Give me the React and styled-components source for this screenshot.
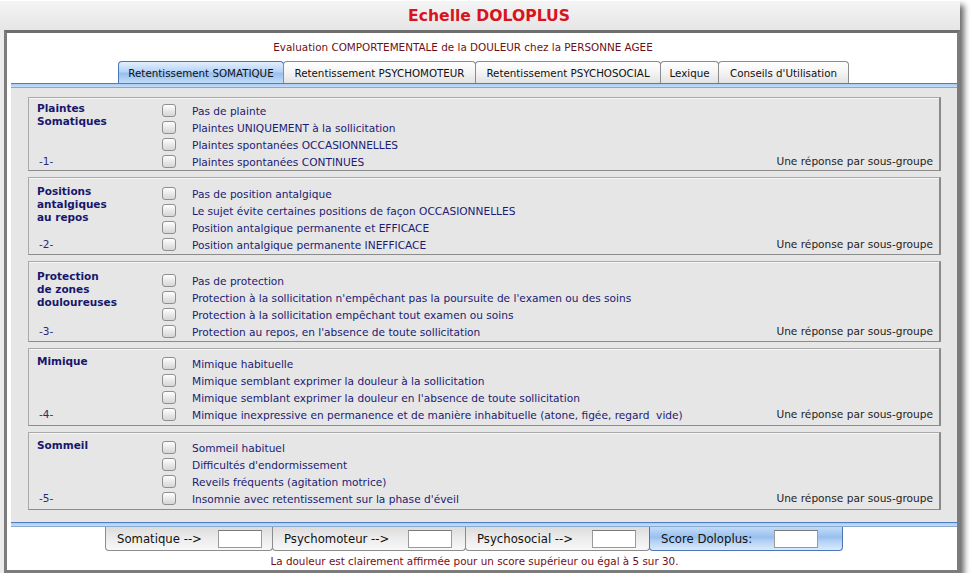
import React from "react";
import styled, { createGlobalStyle } from "styled-components";

const GlobalStyle = createGlobalStyle`
  html, body {
    margin: 0;
    padding: 0;
    background: #ffffff;
  }
  body {
    font-family: "DejaVu Sans", "Liberation Sans", sans-serif;
  }
`;

const topTabs = [
  { label: "Retentissement SOMATIQUE", width: 166, active: true },
  { label: "Retentissement PSYCHOMOTEUR", width: 193 },
  { label: "Retentissement PSYCHOSOCIAL", width: 186 },
  { label: "Lexique", width: 59 },
  { label: "Conseils d'Utilisation", width: 131 },
];

const groups = [
  {
    title: ["Plaintes", "Somatiques"],
    num: "-1-",
    pt: 4,
    pb: 0,
    items: [
      "Pas de plainte",
      "Plaintes UNIQUEMENT à la sollicitation",
      "Plaintes spontanées OCCASIONNELLES",
      "Plaintes spontanées CONTINUES",
    ],
  },
  {
    title: ["Positions", "antalgiques", "au repos"],
    num: "-2-",
    pt: 7,
    pb: 1,
    items: [
      "Pas de position antalgique",
      "Le sujet évite certaines positions de façon OCCASIONNELLES",
      "Position antalgique permanente et EFFICACE",
      "Position antalgique permanente INEFFICACE",
    ],
  },
  {
    title: ["Protection", "de zones", "douloureuses"],
    num: "-3-",
    pt: 10,
    pb: 1,
    lift: 2,
    items: [
      "Pas de protection",
      "Protection à la sollicitation n'empêchant pas la poursuite de l'examen ou des soins",
      "Protection à la sollicitation empêchant tout examen ou soins",
      "Protection au repos, en l'absence de toute sollicitation",
    ],
  },
  {
    title: ["Mimique"],
    num: "-4-",
    pt: 6,
    pb: 2,
    items: [
      "Mimique habituelle",
      "Mimique semblant exprimer la douleur à la sollicitation",
      "Mimique semblant exprimer la douleur en l'absence de toute sollicitation",
      "Mimique inexpressive en permanence et de manière inhabituelle (atone, figée, regard  vide)",
    ],
  },
  {
    title: ["Sommeil"],
    num: "-5-",
    pt: 6,
    pb: 2,
    items: [
      "Sommeil habituel",
      "Difficultés d'endormissement",
      "Reveils fréquents (agitation motrice)",
      "Insomnie avec retentissement sur la phase d'éveil",
    ],
  },
];

const scoreTabs = [
  { label: "Somatique -->", width: 168, pr: 10 },
  { label: "Psychomoteur -->", width: 194, pr: 13 },
  { label: "Psychosocial -->", width: 185, pr: 13 },
  { label: "Score Doloplus:", width: 194, pr: 24, active: true },
];

export default function App() {
  return (
    <>
      <GlobalStyle />
      <Window>
        <TitleBar>Echelle DOLOPLUS</TitleBar>
        <Frame>
          <Subtitle>
            Evaluation COMPORTEMENTALE de la DOULEUR chez la PERSONNE AGEE
          </Subtitle>
          <TabRow>
            {topTabs.map((t) => (
              <TopTab key={t.label} $w={t.width} $active={t.active}>
                {t.label}
              </TopTab>
            ))}
          </TabRow>
          <BlueLine />
          <Panel>
            {groups.map((g) => (
              <Group key={g.num} $pt={g.pt} $pb={g.pb}>
                <LabelCol>
                  <GroupTitle $lift={g.lift}>
                    {g.title.map((l) => (
                      <div key={l}>{l}</div>
                    ))}
                  </GroupTitle>
                  <GroupNum>{g.num}</GroupNum>
                </LabelCol>
                <Options>
                  {g.items.map((it) => (
                    <Option key={it}>
                      <Check />
                      <OptionText>{it}</OptionText>
                    </Option>
                  ))}
                </Options>
                <Note>Une réponse par sous-groupe</Note>
              </Group>
            ))}
          </Panel>
          <BlueLine />
          <ScoreRow>
            {scoreTabs.map((t) => (
              <ScoreTab key={t.label} $w={t.width} $pr={t.pr} $active={t.active}>
                <span>{t.label}</span>
                <ScoreInput />
              </ScoreTab>
            ))}
          </ScoreRow>
          <Footer>
            La douleur est clairement affirmée pour un score supérieur ou égal à 5 sur 30.
          </Footer>
        </Frame>
      </Window>
    </>
  );
}

const Window = styled.div`
  width: 960px;
  height: 573px;
  background: #ececec;
  box-shadow: 4px 5px 6px rgba(0, 0, 0, 0.6);
  display: flex;
  flex-direction: column;
`;

const TitleBar = styled.div`
  height: 30px;
  flex: none;
  display: flex;
  align-items: center;
  justify-content: center;
  padding-left: 18px;
  box-sizing: border-box;
  background: linear-gradient(#f4f4f4, #e6e6e6);
  border-top: 1px solid #ffffff;
  color: #d8141c;
  font-weight: bold;
  font-size: 15.6px;
`;

const Frame = styled.div`
  flex: 1;
  margin-left: 4px;
  border: 3px solid #7c7c7c;
  border-top-color: #6e6e6e;
  background: #ffffff;
  padding: 8px 0 0 4px;
  display: flex;
  flex-direction: column;
`;

const Subtitle = styled.div`
  height: 13px;
  line-height: 13px;
  font-size: 10.4px;
  color: #6c1018;
  text-align: center;
  padding-right: 42px;
`;

const TabRow = styled.div`
  margin-top: 7px;
  height: 22px;
  display: flex;
  justify-content: center;
  align-items: flex-end;
`;

const TopTab = styled.div`
  width: ${(p) => p.$w}px;
  height: 22px;
  box-sizing: border-box;
  border: 1px solid ${(p) => (p.$active ? "#4a76b8" : "#8c8c8c")};
  border-bottom: none;
  border-radius: 4px 4px 0 0;
  margin-left: -1px;
  background: ${(p) =>
    p.$active
      ? "linear-gradient(#e3effd 0%, #b6d4f6 45%, #98c0ef 55%, #c2dcf8 100%)"
      : "linear-gradient(#ffffff 0%, #f4f4f4 50%, #e2e2e2 100%)"};
  display: flex;
  align-items: center;
  justify-content: center;
  font-size: 10.3px;
  color: #111;
  white-space: nowrap;
`;

const BlueLine = styled.div`
  height: 5px;
  flex: none;
  box-sizing: border-box;
  border-top: 1px solid #4f7fc2;
  border-bottom: 1px solid #8aa7cc;
  background: linear-gradient(#a9cbf3, #c9def7);
`;

const Panel = styled.div`
  height: 434px;
  flex: none;
  box-sizing: border-box;
  background: #e6e6e6;
  padding: 9px 16px 12px 17px;
  display: flex;
  flex-direction: column;
  gap: 6px;
`;

const Group = styled.div`
  display: flex;
  border: 1px solid #a9a9a9;
  border-right: 2px solid #8a8a8a;
  border-bottom-color: #8c8c8c;
  box-shadow: inset 0 1px 0 #f6f6f6;
  padding: ${(p) => p.$pt}px 6px ${(p) => p.$pb}px 8px;
`;

const LabelCol = styled.div`
  width: 125px;
  flex: none;
  display: flex;
  flex-direction: column;
  justify-content: space-between;
`;

const GroupTitle = styled.div`
  font-weight: bold;
  font-size: 10.5px;
  line-height: 13px;
  color: #17176c;
  margin-top: ${(p) => -(p.$lift || 0)}px;
`;

const GroupNum = styled.div`
  font-size: 10.5px;
  line-height: 17px;
  color: #2a2a72;
  padding-left: 2px;
`;

const Options = styled.div`
  display: flex;
  flex-direction: column;
`;

const Option = styled.div`
  height: 17px;
  display: flex;
  align-items: center;
`;

const Check = styled.span`
  width: 14px;
  height: 13px;
  box-sizing: border-box;
  border: 1px solid #8f8f8f;
  border-radius: 3px;
  background: linear-gradient(#ffffff, #e9e9e9 50%, #d6d6d6);
  flex: none;
`;

const OptionText = styled.span`
  margin-left: 16px;
  font-size: 10.6px;
  color: #1b1b74;
  white-space: pre;
`;

const Note = styled.div`
  margin-left: auto;
  align-self: flex-end;
  line-height: 17px;
  font-size: 10.6px;
  color: #1e1e1e;
`;

const ScoreRow = styled.div`
  height: 24px;
  display: flex;
  justify-content: center;
  padding-right: 19px;
`;

const ScoreTab = styled.div`
  width: ${(p) => p.$w}px;
  height: 24px;
  box-sizing: border-box;
  border: 1px solid ${(p) => (p.$active ? "#4a76b8" : "#8c8c8c")};
  border-top: none;
  border-radius: 0 0 4px 4px;
  margin-left: -1px;
  padding: 0 ${(p) => p.$pr}px 0 11px;
  background: ${(p) =>
    p.$active
      ? "linear-gradient(#c2dcf8 0%, #98c0ef 45%, #b0d0f5 60%, #dceafb 100%)"
      : "linear-gradient(#dcdcdc 0%, #ececec 50%, #f8f8f8 100%)"};
  display: flex;
  align-items: center;
  justify-content: space-between;
  font-size: 11.7px;
  color: #111;
  white-space: nowrap;
`;

const ScoreInput = styled.span`
  width: 44px;
  height: 18px;
  box-sizing: border-box;
  background: #ffffff;
  border: 1px solid #9a9a9a;
  border-top-color: #7a7a7a;
`;

const Footer = styled.div`
  margin-top: 4px;
  height: 13px;
  line-height: 13px;
  font-size: 10.4px;
  color: #7a0c14;
  text-align: center;
  padding-right: 19px;
`;
